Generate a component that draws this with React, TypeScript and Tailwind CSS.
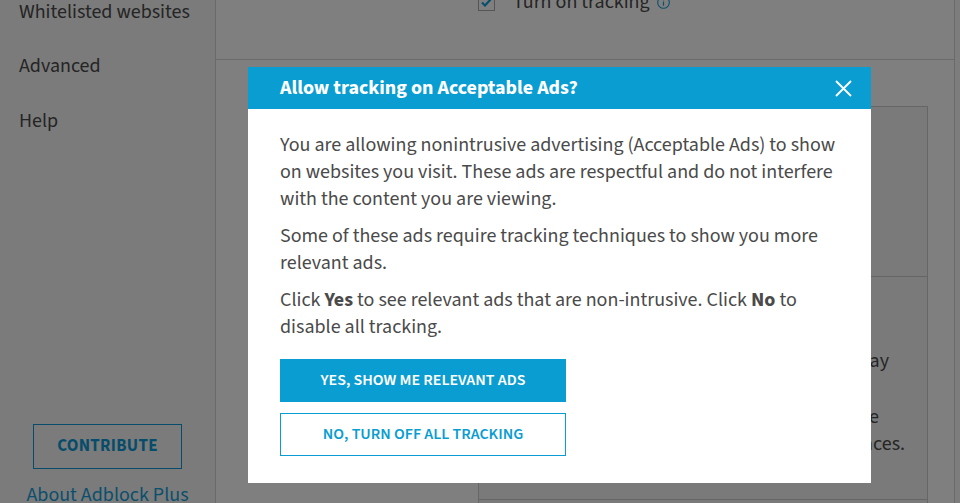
import React from "react";

const font = "font-['Source_Sans_3','Source_Sans_Pro','Liberation_Sans',sans-serif]";

function Sidebar() {
  return (
    <div className="w-[216px] shrink-0 h-full bg-[#f6f6f6] border-r border-[#d4d4d4] flex flex-col">
      <div className="-mt-[15px] flex flex-col text-[20px] text-[#4a4a4a] pl-[19px]">
        <div className="h-[54px] flex items-center">Whitelisted websites</div>
        <div className="h-[54px] flex items-center">Advanced</div>
        <div className="h-[55px] flex items-center">Help</div>
      </div>
      <div className="mt-auto flex flex-col items-center pb-0">
        <div className="w-[149px] h-[45px] border border-[#0f9ad6] flex items-center justify-center text-[#0f9ad6] font-bold text-[17px] tracking-[0.3px]">
          CONTRIBUTE
        </div>
        <div className="mt-[14px] text-[20px] text-[#149fda] leading-[24px] h-[24px] -mb-[4px]">About Adblock Plus</div>
      </div>
    </div>
  );
}

function Main() {
  return (
    <div className="flex-1 h-full flex flex-col bg-white">
      <div className="h-[60px] shrink-0 border-b border-[#d4d4d4] pl-[262px] flex">
        <div className="-mt-[16px] h-[36px] flex items-center gap-[18px] text-[20px] text-[#4a4a4a]">
          <div className="w-[17px] h-[17px] border border-[#aaaaaa] bg-white flex items-center justify-center">
            <svg width="11" height="9" viewBox="0 0 11 9">
              <path d="M1 4.5 L4 7.5 L10 1" stroke="#149fda" strokeWidth="2.2" fill="none" />
            </svg>
          </div>
          <div className="flex items-center gap-[7px]">
            <span>Turn on tracking</span>
            <svg width="13" height="13" viewBox="0 0 13 13">
              <circle cx="6.5" cy="6.5" r="5.8" stroke="#149fda" strokeWidth="1.1" fill="none" />
              <rect x="5.9" y="5.5" width="1.2" height="4.2" fill="#149fda" />
              <rect x="5.9" y="3" width="1.2" height="1.3" fill="#149fda" />
            </svg>
          </div>
        </div>
      </div>
      <div className="flex-1 pl-[262px] pt-[46px] flex">
        <div className="w-[450px] h-full flex flex-col border-l border-r border-t border-[#cccccc] bg-[#f4f4f4]">
          <div className="h-[170px] shrink-0 border-b border-[#cccccc]"></div>
          <div className="h-[223px] shrink-0 border-b border-[#cccccc] text-[20px] text-[#4a4a4a] leading-[27px] whitespace-nowrap overflow-hidden flex flex-col items-end pt-[71px]">
            <div className="pr-[38px]">Some websites may</div>
            <div className="mt-[29px] pr-[48px]">Block all the tracking done the same</div>
            <div className="pr-[22px]">by your preferences.</div>
          </div>
          <div className="flex-1"></div>
        </div>
      </div>
    </div>
  );
}

function Modal() {
  return (
    <div className="absolute left-[248px] top-[67px] w-[623px] bg-white">
      <div className="h-[42px] bg-[#0a9dd1] flex items-center justify-between pl-[32px] pr-[19px]">
        <div className="text-white font-bold text-[20px]">Allow tracking on Acceptable Ads?</div>
        <svg width="17" height="17" viewBox="0 0 17 17">
          <path d="M1 1 L16 16 M16 1 L1 16" stroke="white" strokeWidth="1.8" />
        </svg>
      </div>
      <div className="px-[32px] pt-[23px] pb-[27px] text-[20px] leading-[27px] text-[#4a4a4a]">
        <p>
          You are allowing nonintrusive advertising (Acceptable Ads) to show on websites you visit. These ads are
          respectful and do not interfere with the content you are viewing.
        </p>
        <p className="mt-[10px]">Some of these ads require tracking techniques to show you more relevant ads.</p>
        <p className="mt-[10px]">
          Click <b>Yes</b> to see relevant ads that are non-intrusive. Click <b>No</b> to disable all tracking.
        </p>
        <div className="mt-[18px] flex flex-col gap-[11px] w-[286px]">
          <div className="h-[43px] bg-[#0a9dd1] text-white font-semibold text-[16px] flex items-center justify-center">
            YES, SHOW ME RELEVANT ADS
          </div>
          <div className="h-[43px] border border-[#0a9dd1] text-[#0a9dd1] font-semibold text-[16px] flex items-center justify-center">
            NO, TURN OFF ALL TRACKING
          </div>
        </div>
      </div>
    </div>
  );
}

export default function App() {
  return (
    <div className={`relative w-[960px] h-[503px] overflow-hidden flex ${font}`}>
      <Sidebar />
      <Main />
      <div className="w-[6px] h-full border-l border-[#d4d4d4] bg-[#fafafa]"></div>
      <div className="absolute inset-0 bg-black/50"></div>
      <Modal />
    </div>
  );
}
